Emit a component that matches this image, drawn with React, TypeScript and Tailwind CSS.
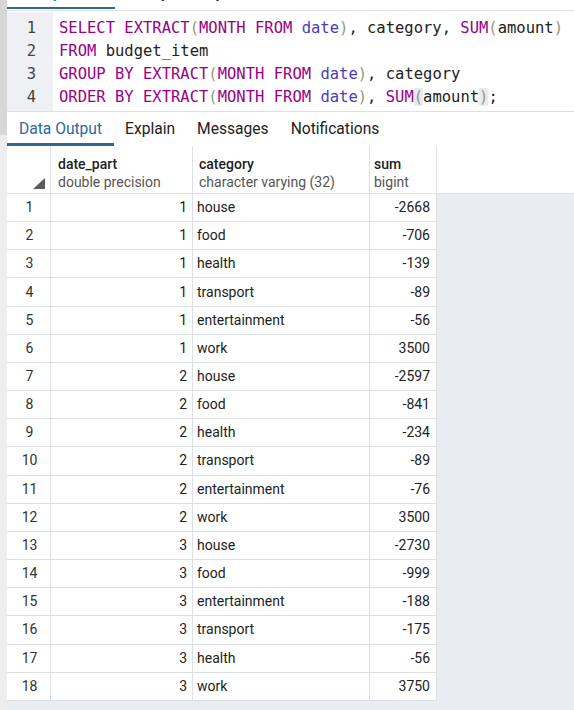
import React from 'react'

type Row = { n: number; month: number; category: string; sum: number }

const ROWS: Row[] = [
  { n: 1, month: 1, category: 'house', sum: -2668 },
  { n: 2, month: 1, category: 'food', sum: -706 },
  { n: 3, month: 1, category: 'health', sum: -139 },
  { n: 4, month: 1, category: 'transport', sum: -89 },
  { n: 5, month: 1, category: 'entertainment', sum: -56 },
  { n: 6, month: 1, category: 'work', sum: 3500 },
  { n: 7, month: 2, category: 'house', sum: -2597 },
  { n: 8, month: 2, category: 'food', sum: -841 },
  { n: 9, month: 2, category: 'health', sum: -234 },
  { n: 10, month: 2, category: 'transport', sum: -89 },
  { n: 11, month: 2, category: 'entertainment', sum: -76 },
  { n: 12, month: 2, category: 'work', sum: 3500 },
  { n: 13, month: 3, category: 'house', sum: -2730 },
  { n: 14, month: 3, category: 'food', sum: -999 },
  { n: 15, month: 3, category: 'entertainment', sum: -188 },
  { n: 16, month: 3, category: 'transport', sum: -175 },
  { n: 17, month: 3, category: 'health', sum: -56 },
  { n: 18, month: 3, category: 'work', sum: 3750 }
]

const K = ({ children }: { children: React.ReactNode }) => (
  <span className="text-[#990088]">{children}</span>
)
const B = ({ children, hl }: { children: React.ReactNode; hl?: boolean }) => (
  <span className={hl ? 'text-[#999977] bg-[#e6eaf1]' : 'text-[#999977]'}>{children}</span>
)
const D = () => <span className="text-[#4a3cc0]">date</span>

const TABS = ['Data Output', 'Explain', 'Messages', 'Notifications']

export default function App() {
  return (
    <div className="w-[574px] h-[710px] flex overflow-hidden bg-white font-['Roboto',sans-serif] text-[#222]">
      {/* left scroll strip */}
      <div className="w-[7px] flex flex-col shrink-0">
        <div className="h-[135px] bg-[#d7d7d7]"></div>
        <div className="flex-1 bg-[#eeeeee]"></div>
      </div>

      <div className="flex-1 flex flex-col min-w-0">
        {/* query tool tabs, only their descenders show at the top */}
        <div className="h-[7px] overflow-hidden flex text-[16px] leading-[16px]">
          <div className="w-[108px] pl-[12px] -mt-[15px] text-[#2c6aa0] whitespace-nowrap">Query Editor</div>
          <div className="pl-[12px] -mt-[15px] whitespace-nowrap">Query History</div>
        </div>
        <div className="h-[2px] w-[108px] bg-[#326690]"></div>
        <div className="h-px"></div>
        <div className="h-px bg-[#dde0e5]"></div>
        <div className="h-px"></div>

        {/* sql editor */}
        <div className="h-[100px] flex border-b border-[#dde0e5] font-['DejaVu_Sans_Mono',monospace] text-[15.5px] leading-[23px]">
          <div className="w-[46px] bg-[#eef0f3] pt-[5px] pr-[17px] text-right text-[#444]">
            <div>1</div>
            <div>2</div>
            <div>3</div>
            <div>4</div>
          </div>
          <div className="flex-1 pt-[5px] pl-[6px] whitespace-pre overflow-hidden">
            <div>
              <K>SELECT</K> <K>EXTRACT</K><B>(</B><K>MONTH</K> <K>FROM</K> <D /><B>)</B>, category, <K>SUM</K><B>(</B>amount<B>)</B>
            </div>
            <div>
              <K>FROM</K> budget_item
            </div>
            <div>
              <K>GROUP</K> <K>BY</K> <K>EXTRACT</K><B>(</B><K>MONTH</K> <K>FROM</K> <D /><B>)</B>, category
            </div>
            <div>
              <K>ORDER</K> <K>BY</K> <K>EXTRACT</K><B>(</B><K>MONTH</K> <K>FROM</K> <D /><B>)</B>, <K>SUM</K><B hl>(</B>amount<B hl>)</B>;
            </div>
          </div>
        </div>

        {/* output tabs */}
        <div className="h-[34px] flex text-[15.6px]">
          {TABS.map((t, i) => (
            <div
              key={t}
              className={
                i === 0
                  ? 'px-[12px] pt-[4px] flex items-center border-b-[3px] border-[#326690] text-[#2c6aa0]'
                  : 'px-[11px] pt-[4px] flex items-center border-b-[3px] border-transparent'
              }
            >
              {t}
            </div>
          ))}
        </div>

        {/* result grid header */}
        <div className="h-[48px] flex border-b border-[#dde0e5] text-[14px] leading-[18px] shrink-0">
          <div className="w-[44px] border-r border-[#dde0e5] flex items-end justify-end pr-[5px] pb-[4px]">
            <svg width="12" height="11" viewBox="0 0 12 11">
              <polygon points="12,0 12,11 0,11" fill="#5a5a5a" />
            </svg>
          </div>
          <div className="w-[142px] border-r border-[#dde0e5] pl-[7px] pt-[9px]">
            <div className="font-medium">date_part</div>
            <div className="text-[#555]">double precision</div>
          </div>
          <div className="w-[177px] border-r border-[#dde0e5] pl-[6px] pt-[9px]">
            <div className="font-medium">category</div>
            <div className="text-[#555]">character varying (32)</div>
          </div>
          <div className="w-[67px] border-r border-[#dde0e5] pl-[4px] pt-[9px]">
            <div className="font-medium">sum</div>
            <div className="text-[#555]">bigint</div>
          </div>
        </div>

        {/* result rows */}
        <div className="flex-1 bg-[#e9ecf0]">
          <div className="w-[430px] bg-white text-[14px]">
            {ROWS.map((r) => (
              <div key={r.n} className="h-[28.17px] flex border-b border-[#dde0e5]">
                <div className="w-[44px] border-r border-[#dde0e5] flex items-center justify-center pl-[2px] text-[#333]">
                  {r.n}
                </div>
                <div className="w-[142px] border-r border-[#dde0e5] flex items-center justify-end pr-[5px]">
                  {r.month}
                </div>
                <div className="w-[177px] border-r border-[#dde0e5] flex items-center pl-[4px]">
                  {r.category}
                </div>
                <div className="w-[67px] border-r border-[#dde0e5] flex items-center justify-end pr-[6px]">
                  {r.sum}
                </div>
              </div>
            ))}
          </div>
        </div>
      </div>
    </div>
  )
}
